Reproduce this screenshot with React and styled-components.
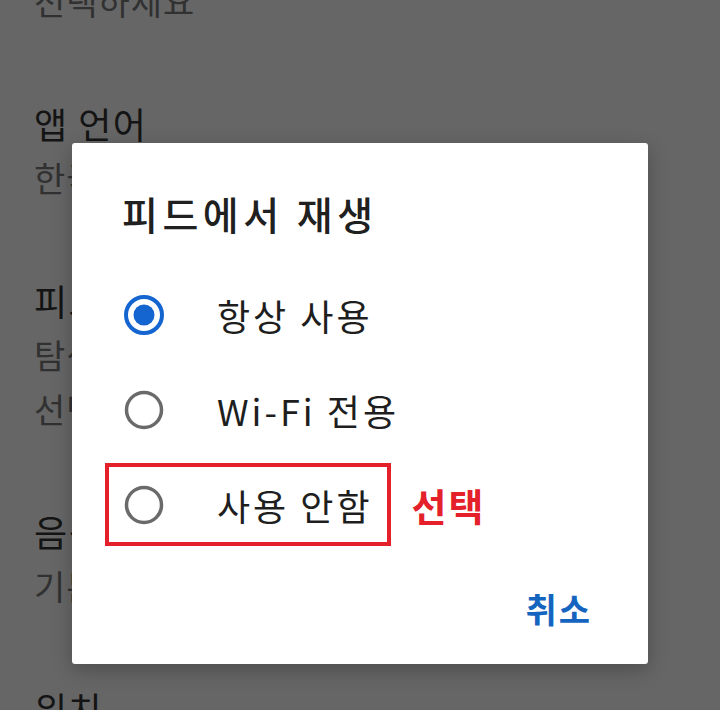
import React from "react";
import styled, { createGlobalStyle } from "styled-components";

const Global = createGlobalStyle`
  html, body { margin: 0; padding: 0; }
  body {
    width: 720px;
    height: 710px;
    overflow: hidden;
    background: #666666;
    font-family: "Noto Sans CJK KR", "Noto Sans", sans-serif;
  }
`;

const Screen = styled.div`
  position: relative;
  width: 720px;
  height: 710px;
  overflow: hidden;
  background: #666666;
`;

const SettingsList = styled.div`
  display: flex;
  flex-direction: column;
  gap: 67px;
  padding-left: 34px;
  margin-top: -26px;
`;

const Item = styled.div`
  display: flex;
  flex-direction: column;
`;

const ItemTitle = styled.div`
  font-size: 36px;
  line-height: 56px;
  letter-spacing: 1.5px;
  color: #141414;
  white-space: nowrap;
`;

const ItemSub = styled.div`
  font-size: 34px;
  line-height: 54px;
  letter-spacing: 1px;
  color: #313131;
  white-space: nowrap;
`;

const Dialog = styled.div`
  position: absolute;
  left: 72px;
  top: 143px;
  width: 576px;
  height: 521px;
  box-sizing: border-box;
  background: #ffffff;
  border-radius: 3px;
  box-shadow: 0 6px 20px rgba(0, 0, 0, 0.25);
  display: flex;
  flex-direction: column;
  padding-top: 47px;
`;

const DialogTitle = styled.div`
  padding-left: 50px;
  font-size: 39px;
  font-weight: 500;
  line-height: 46px;
  letter-spacing: 4.5px;
  color: #202020;
  margin-bottom: 31px;
`;

const Options = styled.div`
  display: flex;
  flex-direction: column;
`;

const Row = styled.div`
  display: flex;
  align-items: center;
  height: 95px;
  padding-left: ${(p) => p.$indent}px;
`;

const Highlight = styled.div`
  display: flex;
  align-items: center;
  box-sizing: border-box;
  height: 83px;
  margin-left: 33px;
  padding: 0 14px 0 15px;
  border: 4px solid #e4212b;
`;

const Option = styled.div`
  display: flex;
  align-items: center;
  gap: 53px;
`;

const OptionLabel = styled.span`
  font-size: 36px;
  line-height: 44px;
  letter-spacing: 3px;
  color: #1e1e1e;
  white-space: nowrap;
`;

const Note = styled.span`
  margin-left: 21px;
  font-size: 38px;
  font-weight: 700;
  letter-spacing: 2px;
  color: #e4212b;
  white-space: nowrap;
`;

const Footer = styled.div`
  display: flex;
  justify-content: flex-end;
  padding-right: 56px;
  margin-top: 36px;
`;

const TextButton = styled.button`
  border: none;
  background: none;
  padding: 0;
  font-family: inherit;
  font-size: 34px;
  font-weight: 700;
  line-height: 41px;
  letter-spacing: 2px;
  color: #1565c0;
`;

const RadioIcon = ({ checked }) => (
  <svg width="40" height="40" viewBox="0 0 40 40">
    {checked ? (
      <>
        <circle cx="20" cy="20" r="18" fill="none" stroke="#1565d0" strokeWidth="4" />
        <circle cx="20" cy="20" r="10.5" fill="#1565d0" />
      </>
    ) : (
      <circle cx="20" cy="20" r="17.5" fill="none" stroke="#6a6a6a" strokeWidth="3.5" />
    )}
  </svg>
);

export default function App() {
  return (
    <>
      <Global />
      <Screen>
        <SettingsList>
          <Item>
            <ItemSub>선택하세요</ItemSub>
          </Item>
          <Item>
            <ItemTitle>앱 언어</ItemTitle>
            <ItemSub>한국어</ItemSub>
          </Item>
          <Item>
            <ItemTitle>피드에서 재생</ItemTitle>
            <ItemSub>탐색 피드에서 동영상 재생</ItemSub>
            <ItemSub>선택하세요</ItemSub>
          </Item>
          <Item>
            <ItemTitle>음성 검색</ItemTitle>
            <ItemSub>기본 언어</ItemSub>
          </Item>
          <Item>
            <ItemTitle>위치</ItemTitle>
          </Item>
        </SettingsList>

        <Dialog>
          <DialogTitle>피드에서 재생</DialogTitle>
          <Options>
            <Row $indent={52}>
              <Option>
                <RadioIcon checked />
                <OptionLabel>항상 사용</OptionLabel>
              </Option>
            </Row>
            <Row $indent={52}>
              <Option>
                <RadioIcon />
                <OptionLabel>Wi-Fi 전용</OptionLabel>
              </Option>
            </Row>
            <Row $indent={0}>
              <Highlight>
                <Option>
                  <RadioIcon />
                  <OptionLabel>사용 안함</OptionLabel>
                </Option>
              </Highlight>
              <Note>선택</Note>
            </Row>
          </Options>
          <Footer>
            <TextButton>취소</TextButton>
          </Footer>
        </Dialog>
      </Screen>
    </>
  );
}
